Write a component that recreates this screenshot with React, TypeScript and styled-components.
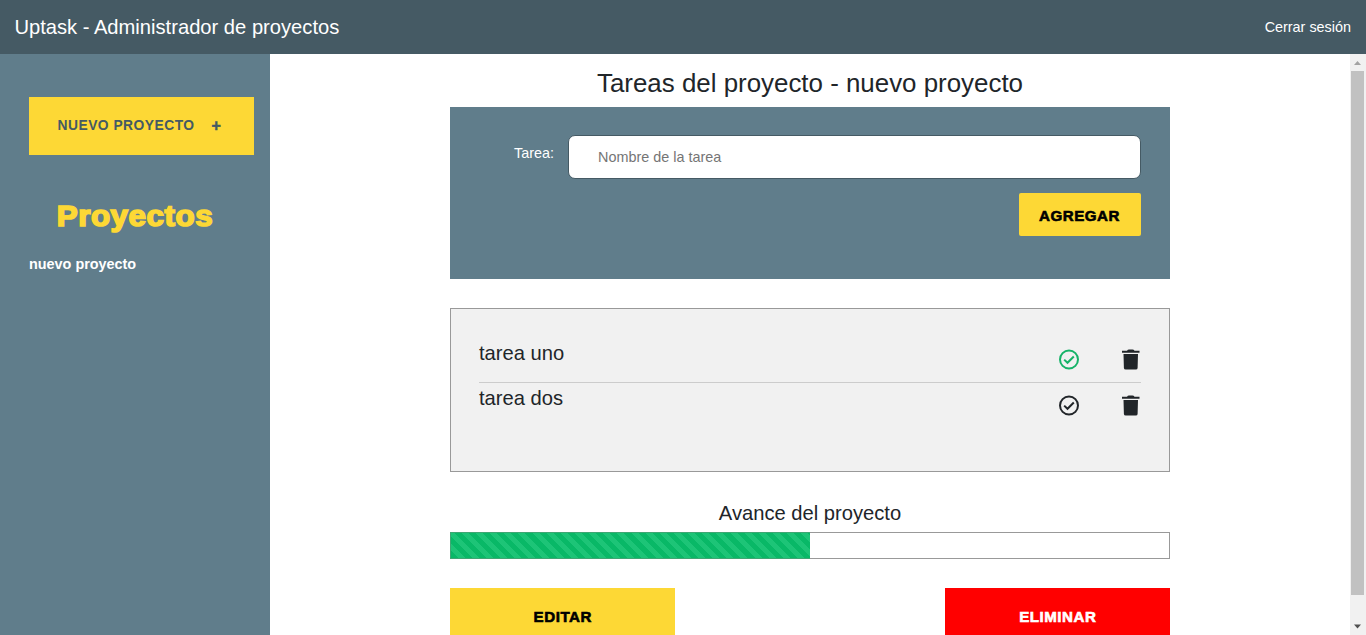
import React from 'react';
import styled, { createGlobalStyle } from 'styled-components';

const GlobalStyle = createGlobalStyle`
  *, *::before, *::after { box-sizing: border-box; }
  html, body, #root { height: 100%; margin: 0; }
  body {
    overflow: hidden;
    background: #fff;
    color: #212529;
    font-family: 'Liberation Sans', Arial, sans-serif;
    font-size: 14.4px;
    line-height: 20px;
  }
  h1, h2, p, ul { margin: 0; padding: 0; font-weight: 400; }
  ul { list-style: none; }
`;

const Page = styled.div`
  display: flex;
  flex-direction: column;
  height: 100vh;
  overflow: hidden;
`;

const TopBar = styled.header`
  display: flex;
  flex: 0 0 54px;
  align-items: center;
  justify-content: space-between;
  padding: 0 15px 0 14.4px;
  background: #455a64;
  color: #fff;
`;

const Brand = styled.h1`
  font-size: 20.16px;
  line-height: 24px;
`;

const Logout = styled.a`
  color: #fff;
  font-size: 14.4px;
`;

const Body = styled.div`
  display: flex;
  flex: 1;
  min-height: 0;
`;

const Sidebar = styled.aside`
  flex: 0 0 270px;
  padding: 43px 16px 0 29px;
  background: #607d8b;
`;

const NewProject = styled.a`
  display: flex;
  align-items: center;
  height: 58px;
  gap: 17px;
  padding-left: 28.5px;
  background: #fdd835;
  color: #455a64;
  font-size: 13.8px;
  font-weight: 700;
  letter-spacing: 0.5px;
`;

const Plus = styled.span`
  font-size: 16px;
  -webkit-text-stroke: 0.5px currentColor;
`;

const SidebarTitle = styled.h2`
  margin: 43px 13px 0 0;
  color: #fdd835;
  font-size: 28.8px;
  font-weight: 700;
  letter-spacing: 0.5px;
  line-height: 36px;
  text-align: center;
  transform: scaleX(1.09);
  -webkit-text-stroke: 1.6px currentColor;
`;

const ProjectLink = styled.li`
  margin-top: 20px;
  color: #fff;
  font-weight: 700;
`;

const Main = styled.main`
  display: flex;
  flex: 1;
  flex-direction: column;
  align-items: center;
  overflow: hidden;
  padding-top: 14px;
`;

const Content = styled.div`
  flex: none;
  width: 720px;
`;

const PageTitle = styled.h1`
  font-size: 25.9px;
  line-height: 30px;
  text-align: center;
`;

const TaskForm = styled.form`
  display: flex;
  flex-direction: column;
  align-items: flex-end;
  gap: 14px;
  height: 172px;
  margin-top: 9px;
  padding: 28px 29px;
  background: #607d8b;
`;

const Field = styled.div`
  display: flex;
  align-items: flex-start;
  gap: 14px;
`;

const Label = styled.label`
  padding-top: 8px;
  color: #fff;
`;

const Input = styled.input`
  width: 573px;
  height: 44px;
  padding: 0 29px;
  border: 1px solid #455a64;
  border-radius: 7px;
  background: #fff;
  font-family: inherit;
  font-size: 14.4px;
  &::placeholder { color: #757575; }
`;

const HeavyButton = styled.button<{ $bg: string; $color?: string; $width: number; $height: number }>`
  width: ${p => p.$width}px;
  height: ${p => p.$height}px;
  padding: 0;
  border: 0;
  background: ${p => p.$bg};
  color: ${p => p.$color || '#000'};
  font-family: inherit;
  font-size: 14.4px;
  font-weight: 700;
  letter-spacing: 0.5px;
  -webkit-text-stroke: 0.6px currentColor;
`;

const ButtonText = styled.span`
  display: inline-block;
  transform: scaleX(1.05);
`;

const AddButton = styled(HeavyButton)`
  padding-top: 2px;
  border-radius: 2px;
`;

const TaskList = styled.ul`
  height: 164px;
  margin-top: 29px;
  padding: 28px;
  border: 1px solid #999;
  background: #f1f1f1;
`;

const TaskItem = styled.li`
  display: flex;
  justify-content: space-between;
  height: 45px;
  padding-top: 4px;
  & + & { border-top: 1px solid #ccc; padding-top: 3px; }
`;

const TaskName = styled.p`
  font-size: 20.16px;
  line-height: 24px;
`;

const Actions = styled.div`
  display: flex;
  gap: 42px;
  height: 31px;
  padding: 8px 1px 0 0;
  ${TaskItem} + ${TaskItem} & { padding-top: 9px; }
`;

const ProgressTitle = styled.h2`
  margin-top: 29px;
  font-size: 20.16px;
  line-height: 24px;
  text-align: center;
`;

const ProgressBar = styled.div`
  height: 27px;
  margin-top: 7px;
  border: 1px solid #999;
`;

const ProgressFill = styled.div`
  width: 360px;
  height: 27px;
  margin: -1px 0 0 -1px;
  border: 1px solid #3fa673;
  border-right: 0;
  background: repeating-linear-gradient(45deg, #09b867 0 5px, #1dc477 5px 10px);
`;

const Footer = styled.div`
  display: flex;
  justify-content: space-between;
  margin-top: 29px;
`;

const Scrollbar = styled.div`
  display: flex;
  flex: 0 0 16px;
  flex-direction: column;
  background: #f1f1f1;
`;

const Thumb = styled.div`
  width: 13px;
  height: 524px;
  margin-left: 1px;
  background: #c1c1c1;
`;

const Arrow = styled.svg`
  display: block;
  flex: none;
  width: 15px;
  height: 17px;
  &:last-child { margin-top: auto; }
`;

const CheckIcon = ({ color }: { color: string }) => (
  <svg width="20" height="21" viewBox="0 0 20 21" fill="none" stroke={color} strokeWidth="2">
    <circle cx="10" cy="10.500" r="9" />
    <path d="M5.200 10.600l3.300 3.200 6.300-6.300" />
  </svg>
);

const TrashIcon = () => (
  <svg width="19" height="21" viewBox="0 0 19 21" fill="#212529">
    <path d="M1 1.700h5Q6.700.4 8 .4h3.500q1.300 0 2 1.300h5v2.100H1zM2.500 4.900H17l-.4 14q-.1 1.700-1.800 1.700H4.700q-1.700 0-1.800-1.700z" />
  </svg>
);

const tasks = [
  { name: 'tarea uno', done: true },
  { name: 'tarea dos', done: false },
];

export default function App() {
  return (
    <Page>
      <GlobalStyle />
      <TopBar>
        <Brand>Uptask - Administrador de proyectos</Brand>
        <Logout>Cerrar sesión</Logout>
      </TopBar>
      <Body>
        <Sidebar>
          <NewProject><span>NUEVO PROYECTO</span><Plus>+</Plus></NewProject>
          <SidebarTitle>Proyectos</SidebarTitle>
          <ul><ProjectLink>nuevo proyecto</ProjectLink></ul>
        </Sidebar>
        <Main>
          <Content>
            <PageTitle>Tareas del proyecto - nuevo proyecto</PageTitle>
            <TaskForm>
              <Field>
                <Label htmlFor="tarea">Tarea:</Label>
                <Input id="tarea" placeholder="Nombre de la tarea" />
              </Field>
              <AddButton type="button" $bg="#fdd835" $width={122} $height={43}>
                <ButtonText>AGREGAR</ButtonText>
              </AddButton>
            </TaskForm>
            <TaskList>
              {tasks.map(task => (
                <TaskItem key={task.name}>
                  <TaskName>{task.name}</TaskName>
                  <Actions>
                    <CheckIcon color={task.done ? '#16b368' : '#212529'} />
                    <TrashIcon />
                  </Actions>
                </TaskItem>
              ))}
            </TaskList>
            <ProgressTitle>Avance del proyecto</ProgressTitle>
            <ProgressBar><ProgressFill /></ProgressBar>
            <Footer>
              <HeavyButton $bg="#fdd835" $width={225} $height={58}>
                <ButtonText>EDITAR</ButtonText>
              </HeavyButton>
              <HeavyButton $bg="#ff0000" $color="#fff" $width={225} $height={58}>
                <ButtonText>ELIMINAR</ButtonText>
              </HeavyButton>
            </Footer>
          </Content>
        </Main>
        <Scrollbar>
          <Arrow viewBox="0 0 15 17"><path d="M4 11l3.500-4 3.500 4z" fill="#a3a3a3" /></Arrow>
          <Thumb />
          <Arrow viewBox="0 0 15 17"><path d="M4 6.500h7l-3.500 4z" fill="#505050" /></Arrow>
        </Scrollbar>
      </Body>
    </Page>
  );
}
